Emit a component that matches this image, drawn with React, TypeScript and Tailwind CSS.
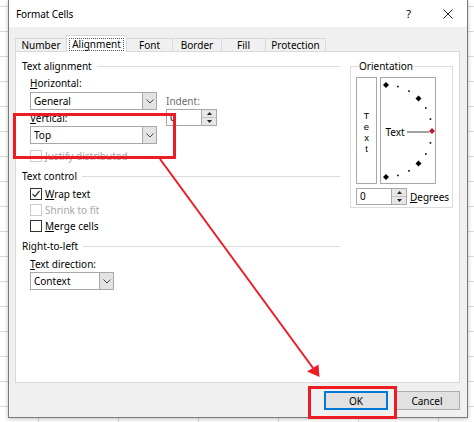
import React from "react";

const tabs = [
  { name: "Number", w: "w-[51px]" },
  { name: "Alignment", w: "w-[61px]", active: true },
  { name: "Font", w: "w-[45px]" },
  { name: "Border", w: "w-[49px]" },
  { name: "Fill", w: "w-[44px]" },
  { name: "Protection", w: "w-[61px]" },
];

function Chevron() {
  return (
    <svg width="8" height="5" viewBox="0 0 8 5">
      <path d="M0.5 0.5 L4 4 L7.5 0.5" fill="none" stroke="#444" strokeWidth="1" />
    </svg>
  );
}

function Select({ value, w }: { value: string; w: string }) {
  return (
    <div className={`flex h-[18px] ${w} border border-[#a8a8a8] bg-white`}>
      <span className="flex-1 pl-[3px] leading-[16px]">{value}</span>
      <span className="flex w-[14px] items-center justify-center border-l border-[#a8a8a8] bg-[#e3e3e3]">
        <Chevron />
      </span>
    </div>
  );
}

function Spin() {
  return (
    <div className="flex w-[15px] flex-col border-l border-[#a8a8a8] bg-[#e6e6e6]">
      <div className="flex flex-1 items-center justify-center border-b border-[#c4c4c4]">
        <svg width="5" height="3" viewBox="0 0 5 3">
          <path d="M2.5 0 L5 3 L0 3Z" fill="#222" />
        </svg>
      </div>
      <div className="flex flex-1 items-center justify-center">
        <svg width="5" height="3" viewBox="0 0 5 3">
          <path d="M0 0 L5 0 L2.5 3Z" fill="#222" />
        </svg>
      </div>
    </div>
  );
}

function Group({ title }: { title: string }) {
  return (
    <div className="flex h-[14px] items-center">
      <span>{title}</span>
      <span className="ml-[5px] h-px flex-1 bg-[#dcdcdc]" />
    </div>
  );
}

function CheckRow({
  first,
  rest,
  checked = false,
  disabled = false,
}: {
  first: string;
  rest: string;
  checked?: boolean;
  disabled?: boolean;
}) {
  return (
    <div className="flex h-[16px] items-center pl-[8px]">
      <span
        className={`flex h-[12px] w-[12px] items-center justify-center border bg-white ${
          disabled ? "border-[#cccccc]" : "border-[#333333]"
        }`}
      >
        {checked && (
          <svg width="10" height="10" viewBox="0 0 10 10">
            <path d="M1.5 5 L4 7.5 L8.5 2" fill="none" stroke="#333" strokeWidth="1.2" />
          </svg>
        )}
      </span>
      <span className={`ml-[3px] ${disabled ? "text-[#a6a6a6]" : "text-black"}`}>
        {disabled ? first : <u className="underline-offset-1">{first}</u>}
        {rest}
      </span>
    </div>
  );
}

function Dial() {
  const cx = 5;
  const cy = 53;
  const r = 46;
  const marks = [];
  for (let a = 90; a >= -90; a -= 15) {
    const rad = (a * Math.PI) / 180;
    const x = cx + r * Math.cos(rad);
    const y = cy - r * Math.sin(rad);
    if (a % 45 === 0) {
      marks.push(
        <polygon
          key={a}
          points={`${x},${y - 3} ${x + 3},${y} ${x},${y + 3} ${x - 3},${y}`}
          fill={a === 0 ? "#c0142e" : "#000"}
        />
      );
    } else {
      marks.push(<rect key={a} x={x - 0.8} y={y - 0.8} width="1.6" height="1.6" fill="#000" />);
    }
  }
  return (
    <svg width="54" height="105" viewBox="0 0 54 105" className="block">
      <text x="4.5" y="57.5" fontSize="10" fontFamily="Noto Sans, sans-serif" fill="#000">
        Text
      </text>
      <line x1="26" y1="54" x2="48" y2="54" stroke="#808080" strokeWidth="1.5" />
      {marks}
    </svg>
  );
}

export default function App() {
  return (
    <div className="relative h-[422px] w-[474px] overflow-hidden bg-white bg-[linear-gradient(#d9d9d9_1px,transparent_1px),linear-gradient(90deg,#d9d9d9_1px,transparent_1px)] bg-[size:80px_25px] bg-[position:38px_6px] font-['Noto_Sans',sans-serif] text-[10px] leading-[14px] text-black">
      {/* dialog window */}
      <div className="absolute left-[8px] top-0 flex h-[418px] w-[460px] flex-col border-x border-b border-[#7a7a7a] bg-[#f0f0f0] shadow-[0_1px_4px_rgba(0,0,0,0.25)]">
        <div className="flex h-[27px] items-center bg-white pl-[7px] pr-[14px]">
          <span className="tracking-[-0.1px]">Format Cells</span>
          <span className="ml-auto mr-[32px] text-[11px]">?</span>
          <svg width="10" height="10" viewBox="0 0 10 10">
            <path d="M0.5 0.5 L9.5 9.5 M9.5 0.5 L0.5 9.5" stroke="#222" strokeWidth="1" />
          </svg>
        </div>

        <div className="flex flex-1 flex-col pl-[6px] pr-[7px] pt-[8px]">
          <div className="flex h-[16px] items-end">
            {tabs.map((t, i) =>
              t.active ? (
                <div
                  key={t.name}
                  className={`relative z-10 -mb-px flex h-[17px] ${t.w} items-center justify-center border-x border-t border-[#d9d9d9] bg-white`}
                >
                  <span className="border border-dotted border-[#555] px-[2px] leading-[11px]">{t.name}</span>
                </div>
              ) : (
                <div
                  key={t.name}
                  className={`flex h-[13px] ${t.w} items-center justify-center border-t border-[#d9d9d9] ${
                    i === 2 ? "" : "border-l"
                  } ${i === tabs.length - 1 ? "border-r" : ""}`}
                >
                  {t.name}
                </div>
              )
            )}
          </div>

          <div className="flex h-[332px] border border-[#d9d9d9] bg-white pl-[6px] pt-[7px]">
            {/* left column */}
            <div className="flex w-[318px] flex-col">
              <Group title="Text alignment" />
              <div className="mt-[3px] flex pl-[8px]">
                <div className="flex flex-col">
                  <span>
                    <u>H</u>orizontal:
                  </span>
                  <div className="mt-[2px]">
                    <Select value="General" w="w-[127px]" />
                  </div>
                  <span className="mt-px">
                    <u>V</u>ertical:
                  </span>
                  <div className="mt-px">
                    <Select value="Top" w="w-[127px]" />
                  </div>
                </div>
                <div className="ml-[9px] flex flex-col pt-[18px]">
                  <span className="text-[#6d6d6d]">Indent:</span>
                  <div className="mt-px flex h-[17px] w-[51px] border border-[#a8a8a8] bg-white">
                    <span className="flex-1 pl-[3px] leading-[15px]">0</span>
                    <Spin />
                  </div>
                </div>
              </div>
              <div className="mt-[4px]">
                <CheckRow first="J" rest="ustify distributed" disabled />
              </div>

              <div className="mt-[5px]">
                <Group title="Text control" />
              </div>
              <div className="mt-[3px] flex flex-col">
                <CheckRow first="W" rest="rap text" checked />
                <CheckRow first="S" rest="hrink to fit" disabled />
                <CheckRow first="M" rest="erge cells" />
              </div>

              <div className="mt-[5px]">
                <Group title="Right-to-left" />
              </div>
              <span className="mt-[4px] pl-[8px]">
                <u>T</u>ext direction:
              </span>
              <div className="mt-px pl-[8px]">
                <Select value="Context" w="w-[84px]" />
              </div>
            </div>

            {/* orientation */}
            <fieldset className="ml-[10px] h-[149px] w-[103px] border border-[#dcdcdc] pl-[5px]">
              <legend className="ml-[2px] px-px leading-[14px]">Orientation</legend>
              <div className="mt-[4px] flex">
                <div className="flex h-[107px] w-[21px] flex-col items-center border border-[#a8a8a8] pt-[32px] font-['Liberation_Sans',sans-serif] text-[9.5px] leading-[11px]">
                  <span>T</span>
                  <span>e</span>
                  <span>x</span>
                  <span>t</span>
                </div>
                <div className="ml-[3px] h-[107px] w-[56px] border border-[#a8a8a8]">
                  <Dial />
                </div>
              </div>
              <div className="mt-[4px] flex items-center">
                <div className="flex h-[17px] w-[51px] border border-[#a8a8a8] bg-white">
                  <span className="flex-1 pl-[3px] leading-[15px]">0</span>
                  <Spin />
                </div>
                <span className="ml-[3px]">
                  <u>D</u>egrees
                </span>
              </div>
            </fieldset>
          </div>

          <div className="flex flex-1 items-start justify-end pt-[8px]">
            <button className="h-[19px] w-[64px] border border-[#0078d7] bg-[#e1e1e1] text-[10px] leading-[16px] shadow-[inset_0_0_0_1px_#0078d7]">
              OK
            </button>
            <button className="ml-[6px] h-[19px] w-[66px] border border-[#adadad] bg-[#e1e1e1] text-[10px] leading-[16px]">
              Cancel
            </button>
          </div>
        </div>
      </div>

      {/* red annotations */}
      <div className="absolute left-[13px] top-[113px] h-[46px] w-[163px] border-[3px] border-[#ed1c24]" />
      <div className="absolute left-[308px] top-[386px] h-[33px] w-[89px] border-[3px] border-[#ed1c24]" />
      <svg className="pointer-events-none absolute left-0 top-0" width="474" height="422" viewBox="0 0 474 422">
        <line x1="160" y1="159" x2="313" y2="368" stroke="#ed1c24" strokeWidth="2" />
        <polygon points="319.5,377 307,371.5 318.5,364.5" fill="#ed1c24" />
      </svg>
    </div>
  );
}
